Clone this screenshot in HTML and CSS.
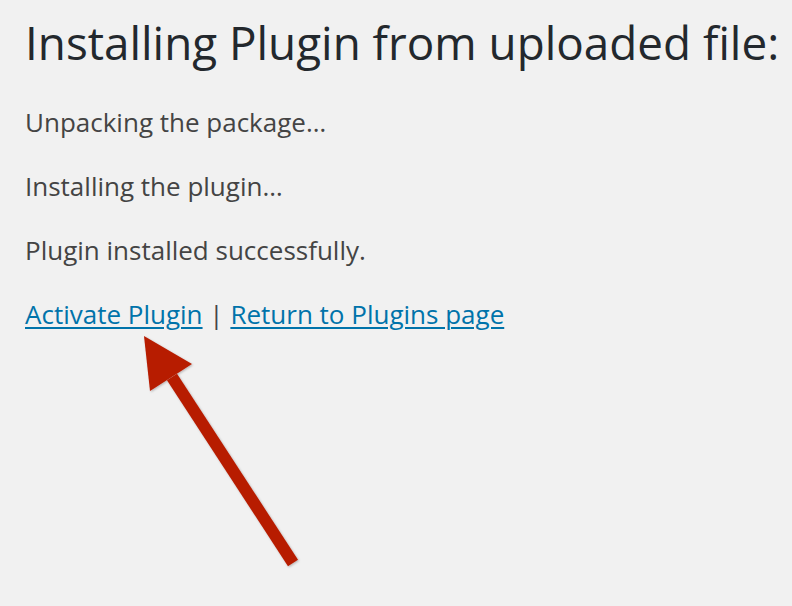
FILE: index.html
```html
<!DOCTYPE html>
<html lang="en">
<head>
  <meta charset="UTF-8">
  <meta name="viewport" content="width=device-width, initial-scale=1.0">
  <title>Install Plugins</title>
  <link rel="stylesheet" href="styles.css">
</head>
<body>
  <div class="wrap">
    <h1>Installing Plugin from uploaded file:</h1>
    <p>Unpacking the package&hellip;</p>
    <p>Installing the plugin&hellip;</p>
    <p>Plugin installed successfully.</p>
    <p class="actions">
      <a href="#">Activate Plugin</a> <span class="sep">|</span> <a href="#">Return to Plugins page</a>
    </p>
  </div>
  <svg class="arrow" width="792" height="606" viewBox="0 0 792 606">
    <defs>
      <filter id="soft" x="-10%" y="-10%" width="120%" height="120%">
        <feDropShadow dx="1" dy="1" stdDeviation="1" flood-color="#000" flood-opacity="0.25"/>
      </filter>
    </defs>
    <g filter="url(#soft)" fill="#b71c05">
      <line x1="172" y1="377" x2="293" y2="563" stroke="#b71c05" stroke-width="12"/>
      <polygon points="144,336 192,364 150,391"/>
    </g>
  </svg>
</body>
</html>
```

FILE: styles.css
```css
html, body {
  margin: 0;
  padding: 0;
  background: #f1f1f1;
}
body {
  font-family: 'Open Sans', sans-serif;
  color: #444;
  position: relative;
  height: 606px;
  overflow: hidden;
}
.wrap {
  padding: 10px 0 0 25px;
}
h1 {
  margin: 0;
  font-size: 45.8px;
  font-weight: 400;
  line-height: 64px;
  color: #23282d;
  white-space: nowrap;
}
p {
  margin: 0;
  font-size: 26px;
  line-height: 64px;
}
p:first-of-type {
  margin-top: 16px;
}
.actions a {
  color: #0073aa;
  text-decoration: underline;
  text-underline-offset: 3px;
  text-decoration-thickness: 2px;
}
.sep {
  color: #444;
}
.arrow {
  position: absolute;
  left: 0;
  top: 0;
  pointer-events: none;
}
```
